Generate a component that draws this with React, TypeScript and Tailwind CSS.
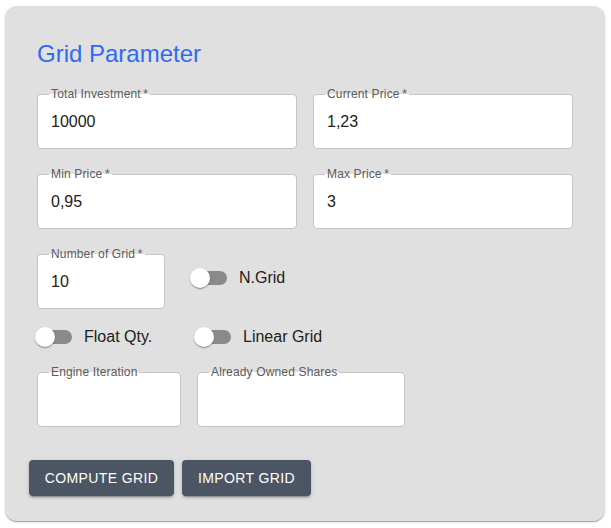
import React from "react";

function Field({ label, value, width }: { label: string; value?: string; width: string }) {
  return (
    <div className={`relative h-[55px] ${width} rounded-[4px] border border-[#c4c4c4] bg-white`}>
      <span className="absolute left-[11px] top-[-8px] whitespace-nowrap bg-[linear-gradient(to_bottom,#e0e0e0_50%,#ffffff_50%)] px-[2px] text-[12px] leading-[14px] tracking-[0.15px] text-[#5c5c5c]">
        {label}
      </span>
      <div className="flex h-full items-center pl-[13px] pt-[1px] text-[16px] text-[#212121]">{value}</div>
    </div>
  );
}

function Switch({ label }: { label: string }) {
  return (
    <div className="flex items-center">
      <div className="relative h-[20px] w-[37px] shrink-0">
        <div className="absolute left-[3px] top-[3px] h-[14px] w-[34px] rounded-full bg-[#8a8a8a]" />
        <div className="absolute left-0 top-0 h-[20px] w-[20px] rounded-full bg-white shadow-[0_2px_1px_-1px_rgba(0,0,0,0.2),0_1px_1px_0_rgba(0,0,0,0.14),0_1px_3px_0_rgba(0,0,0,0.12)]" />
      </div>
      <span className="ml-[12px] whitespace-nowrap text-[16px] leading-[20px] text-[#212121]">{label}</span>
    </div>
  );
}

export default function App() {
  return (
    <div className="min-h-[528px] w-[611px] bg-white pt-[6px] pl-[5px] font-['Liberation_Sans',Arial,sans-serif]">
      <div className="w-[600px] rounded-[12px] bg-[#e0e0e0] px-[32px] pt-[32px] pb-[25px] shadow-[0_2px_1px_-1px_rgba(0,0,0,0.2),0_1px_1px_0_rgba(0,0,0,0.14),0_1px_3px_0_rgba(0,0,0,0.12)]">
        <h1 className="h-[32px] text-[24px] leading-[32px] text-[#2f6af0]">Grid Parameter</h1>

        <div className="mt-[24px] grid grid-cols-[260px_260px] gap-x-[16px] gap-y-[25px]">
          <Field label={"Total Investment\u2009*"} value="10000" width="w-[260px]" />
          <Field label={"Current Price\u2009*"} value="1,23" width="w-[260px]" />
          <Field label={"Min Price\u2009*"} value="0,95" width="w-[260px]" />
          <Field label={"Max Price\u2009*"} value="3" width="w-[260px]" />
        </div>

        <div className="mt-[25px] flex items-start">
          <Field label={"Number of Grid\u2009*"} value="10" width="w-[128px]" />
          <div className="ml-[25px] mt-[14px]">
            <Switch label="N.Grid" />
          </div>
        </div>

        <div className="mt-[18px] ml-[-2px] flex">
          <div className="w-[159px]">
            <Switch label="Float Qty." />
          </div>
          <Switch label="Linear Grid" />
        </div>

        <div className="mt-[25px] flex gap-[16px]">
          <Field label="Engine Iteration" width="w-[144px]" />
          <Field label="Already Owned Shares" width="w-[208px]" />
        </div>

        <div className="mt-[33px] ml-[-8px] flex gap-[8px]">
          <button className="h-[36px] w-[145px] rounded-[4px] bg-[#4b5563] text-[14px] tracking-[0.4px] text-white shadow-[0_3px_1px_-2px_rgba(0,0,0,0.2),0_2px_2px_0_rgba(0,0,0,0.14),0_1px_5px_0_rgba(0,0,0,0.12)]">
            COMPUTE GRID
          </button>
          <button className="h-[36px] w-[129px] rounded-[4px] bg-[#4b5563] text-[14px] tracking-[0.4px] text-white shadow-[0_3px_1px_-2px_rgba(0,0,0,0.2),0_2px_2px_0_rgba(0,0,0,0.14),0_1px_5px_0_rgba(0,0,0,0.12)]">
            IMPORT GRID
          </button>
        </div>
      </div>
    </div>
  );
}
